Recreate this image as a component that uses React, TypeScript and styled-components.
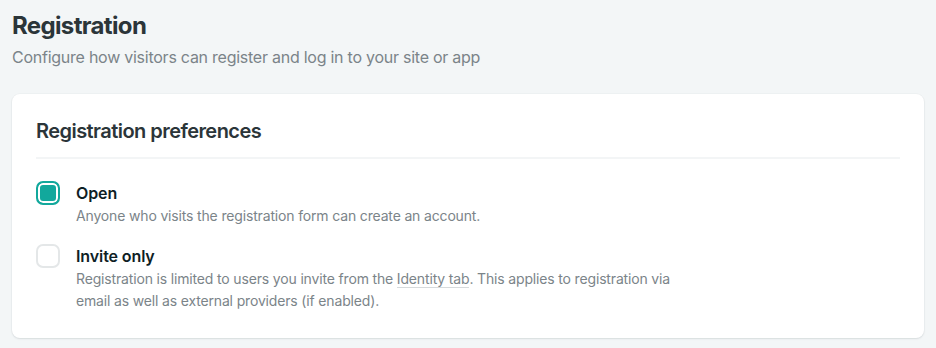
import React from "react";
import styled, { createGlobalStyle } from "styled-components";

const GlobalStyle = createGlobalStyle`
  body {
    margin: 0;
    background: #f3f6f7;
    font-family: Inter, "Noto Sans", sans-serif;
    color: #2e3a3f;
  }
`;

const Page = styled.div`
  padding: 12px 12px 11px 12px;
  width: 912px;
`;

const Title = styled.h1`
  margin: 0;
  font-size: 24px;
  line-height: 28px;
  font-weight: 700;
  color: #2b3539;
  letter-spacing: -0.65px;
`;

const Subtitle = styled.p`
  margin: 7px 0 0;
  font-size: 16px;
  line-height: 20px;
  color: #7b8489;
  letter-spacing: -0.25px;
`;

const Card = styled.section`
  margin-top: 27px;
  background: #fff;
  border-radius: 8px;
  box-shadow: 0 1px 2px rgba(14, 30, 37, 0.1), 0 0 0 1px rgba(14, 30, 37, 0.02);
  padding: 24px 24px 26px;
`;

const CardTitle = styled.h2`
  margin: 0;
  font-size: 20px;
  line-height: 26px;
  font-weight: 600;
  color: #2b3539;
  letter-spacing: -0.55px;
  padding-bottom: 13px;
  border-bottom: 2px solid #f3f5f6;
`;

const Options = styled.div`
  display: flex;
  flex-direction: column;
  gap: 17px;
  margin-top: 22px;
`;

const Option = styled.label`
  display: grid;
  grid-template-columns: 24px 1fr;
  column-gap: 16px;
  align-items: start;
`;

const Box = styled.span<{ $checked: boolean }>`
  width: 24px;
  height: 24px;
  box-sizing: border-box;
  border-radius: 7px;
  border: 2px solid ${(p) => (p.$checked ? "#12a89c" : "#e4e7e8")};
  background: ${(p) => (p.$checked ? "#12a89c" : "#fff")};
  box-shadow: ${(p) => (p.$checked ? "inset 0 0 0 2px #fff" : "none")};
`;

const Text = styled.div`
  display: flex;
  flex-direction: column;
`;

const Label = styled.span`
  font-size: 16px;
  line-height: 24px;
  font-weight: 600;
  color: #0e1e25;
  letter-spacing: -0.1px;
`;

const Desc = styled.span`
  font-size: 14px;
  line-height: 22px;
  color: #7b8489;
  letter-spacing: -0.16px;
  max-width: 610px;
`;

const TabLink = styled.span`
  border-bottom: 1px solid #d6dadc;
`;

export default function App() {
  return (
    <Page>
      <GlobalStyle />
      <Title>Registration</Title>
      <Subtitle>Configure how visitors can register and log in to your site or app</Subtitle>
      <Card>
        <CardTitle>Registration preferences</CardTitle>
        <Options>
          <Option>
            <Box $checked />
            <Text>
              <Label>Open</Label>
              <Desc>Anyone who visits the registration form can create an account.</Desc>
            </Text>
          </Option>
          <Option>
            <Box $checked={false} />
            <Text>
              <Label>Invite only</Label>
              <Desc>
                Registration is limited to users you invite from the <TabLink>Identity tab</TabLink>. This
                applies to registration via email as well as external providers (if enabled).
              </Desc>
            </Text>
          </Option>
        </Options>
      </Card>
    </Page>
  );
}
